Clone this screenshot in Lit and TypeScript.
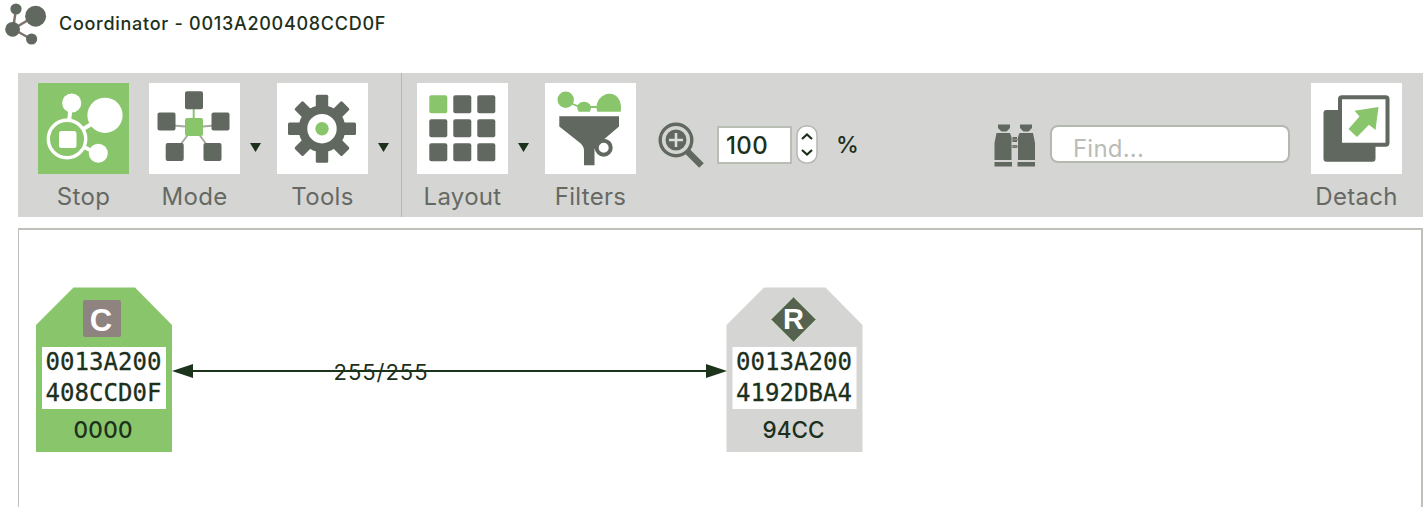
import { LitElement, html, svg, css } from "lit";
import { customElement, property } from "lit/decorators.js";

const DARK = "#60685f";
const GREEN = "#89c56b";

const sq = (x: number, y: number, fill = DARK) =>
  svg`<rect x=${x} y=${y} width="18" height="18" rx="2" fill=${fill} />`;

const icons: Record<string, unknown> = {
  stop: svg`
    <g stroke="#fff" stroke-width="4" fill="none">
      <path d="M32.500 26 31 38M45 46 57 39M46 64 56 69" />
      <circle cx="29" cy="56" r="18.7" stroke-width="3.4" />
    </g>
    <g fill="#fff">
      <circle cx="33.7" cy="20" r="9.6" /><circle cx="67" cy="32.3" r="17.6" />
      <circle cx="60.3" cy="70.3" r="9.5" /><rect x="21" y="48" width="17.5" height="17" rx="2.5" />
    </g>`,
  mode: svg`
    <path d="M18 42 36 43.500M72 42 54 43.500M44.700 44 26 69M44.700 44 63 69" stroke="#a3ab9e" stroke-width="2" fill="none" />
    <path d="M44.700 24V40" stroke=${GREEN} stroke-width="2" />
    <circle cx="44.7" cy="59.5" r="6.5" fill="#fff" />
    ${sq(36, 8.3)}${sq(8.5, 29.5)}${sq(62.5, 29.5)}${sq(36, 35, GREEN)}${sq(16.7, 60)}${sq(54.5, 60)}`,
  tools: svg`
    <g transform="translate(45 45.7)" fill=${DARK}>
      ${[0, 90].map((a) => svg`<rect x="-6.2" y="-34" width="12.4" height="68" rx="1.5" transform="rotate(${a})" />`)}
      ${[45, 135].map((a) => svg`<rect x="-6" y="-33.5" width="12" height="67" rx="1.5" transform="rotate(${a})" />`)}
      <circle r="23.5" /><circle r="14.7" fill="#fff" /><circle r="6.7" fill=${GREEN} />
    </g>`,
  layout: svg`${[12.3, 36.3, 60.2].map((y, r) =>
    [12.3, 36.3, 60.3].map((x, c) => sq(x, y, r + c === 0 ? GREEN : DARK)))}`,
  filters: svg`
    <g fill=${GREEN}>
      <path d="M24 19.5 35 24H55" fill="none" stroke=${GREEN} stroke-width="1.8" />
      <circle cx="20.7" cy="16.7" r="8.2" />
      <path d="M33.7 28.8C30 23 34 18.800 39 18.800c5 0 9 4.200 5.800 10z" />
      <path d="M52.300 28.800C49 19 57 10.800 64.500 10.800S77.500 18 75.700 28.800z" />
    </g>
    <path d="M14.300 33.300H74V43.500L60 55.500 49.500 66V82.300H39V67.500C39 64 37 61.500 34.500 59.500L14.300 43.500z" fill=${DARK} />
    <circle cx="58.700" cy="64.700" r="7" fill="#fff" stroke=${DARK} stroke-width="4" />`,
  detach: svg`
    <rect x="12.500" y="27" width="52" height="51.700" rx="3" fill=${DARK} />
    <rect x="29" y="14.300" width="47.500" height="47.500" rx="2" fill="#fff" stroke=${DARK} stroke-width="4" />
    <path d="M67.500 24 64.500 47 58 41.700 46 54 37.500 46 48.500 33.500 43.500 27.800z" fill=${GREEN} />`,
};

@customElement("tool-button")
class ToolButton extends LitElement {
  @property() icon = "";
  @property() label = "";
  @property({ type: Boolean }) active = false;
  @property({ type: Boolean }) menu = false;

  static styles = css`
    :host { display: flex; align-items: flex-start; }
    .body { display: flex; flex-direction: column; align-items: center; width: 91px; }
    .tile { display: block; width: 91px; height: 91px; background: #fff; }
    .tile.active { background: #89c56b; }
    .label { margin-top: 7px; font-size: 24px; line-height: 32px; letter-spacing: 0.3px; color: #666963; white-space: nowrap; }
    .caret { width: 11px; height: 9px; margin: 60px 0 0 10px; }
  `;

  render() {
    return html`
      <div class="body">
        <svg class="tile ${this.active ? "active" : ""}" viewBox="0 0 91 91">${icons[this.icon]}</svg>
        <span class="label">${this.label}</span>
      </div>
      ${this.menu ? html`<svg class="caret" viewBox="0 0 11 9"><path d="M0 0H11L5.500 9z" fill="#1b301a" /></svg>` : ""}
    `;
  }
}

@customElement("network-map")
class NetworkMap extends LitElement {
  static styles = css`
    :host { display: block; }
    svg { display: block; }
    text { font-family: Inter, sans-serif; fill: #1c301c; }
    .mono { font-family: "DejaVu Sans Mono", monospace; font-size: 24px; stroke: #1c301c; stroke-width: 0.3px; }
    .short { font-size: 22.5px; font-weight: 500; }
    .badge { font-family: "Liberation Sans", sans-serif; font-weight: 700; fill: #fff; }
    .quality { font-size: 22px; }
  `;

  node(x: number, fill: string, badge: unknown, high: string, low: string, short: string, width: number) {
    return svg`<g transform="translate(${x} 57.5)">
      <path d="M0 37.500 37.500 0H99L136 37.500V164.500H0z" fill=${fill} />
      ${badge}
      <rect x="6" y="59.500" width="124" height="62" fill="#fff" />
      <text class="mono" x="9.500" y="82.500" textLength="116">${high}</text>
      <text class="mono" x="9.500" y="113.500" textLength="116">${low}</text>
      <text class="short" x="67" y="150.500" text-anchor="middle" textLength=${width}>${short}</text>
    </g>`;
  }

  render() {
    return html`<svg width="1401" height="277" viewBox="0 0 1401 277">
      ${this.node(17, GREEN, svg`<rect x="47" y="12.500" width="38" height="37" rx="2" fill="#8f8380" />
        <text class="badge" x="65" y="43" font-size="31" text-anchor="middle">C</text>`,
        "0013A200", "408CCD0F", "0000", 59)}
      ${this.node(707.5, "#d5d6d4", svg`<path d="M67 10 89 32 67 54 45 32z" fill="#56614f" stroke="#719361" />
        <text class="badge" x="67" y="41.500" font-size="29" text-anchor="middle">R</text>`,
        "0013A200", "4192DBA4", "94CC", 62)}
      <text class="quality" x="314.500" y="150" textLength="94">255/255</text>
      <path d="M170 141H690" stroke="#1c341c" stroke-width="2" />
      <path d="M153 141 174 134V148zM708 141 687 134V148z" fill="#1c341c" />
    </svg>`;
  }
}

@customElement("app-root")
class AppRoot extends LitElement {
  static styles = css`
    :host { display: block; height: 510px; overflow: hidden; background: #fff; font-family: Inter, sans-serif; color: #1c301c; }
    .title { display: flex; height: 73px; padding-left: 4px; box-sizing: border-box; }
    .logo { width: 46px; height: 46px; }
    .name { margin-left: 9px; padding-top: 12px; font-size: 18px; font-weight: 500; line-height: 24px; letter-spacing: 0.72px; white-space: nowrap; }
    .toolbar { display: flex; align-items: flex-start; box-sizing: border-box; height: 144px; margin: 0 2px 0 18px; padding: 10px 21px 0 20px; background: #d5d6d4; }
    .mode { margin-left: 20px; }
    .tools { margin-left: 16px; }
    .rule { width: 1px; height: 144px; margin: -10px 15px 0 12px; background: #b4b9b0; }
    .filters { margin-left: 16px; }
    .glass { width: 48px; height: 48px; margin: 38px 0 0 22px; }
    .zoom { box-sizing: border-box; width: 75px; height: 38px; margin: 43px 0 0 11px; padding-left: 7px; border: 2px solid #b9beb5; background: #fff; font-size: 24px; font-weight: 500; letter-spacing: 0.4px; line-height: 36px; }
    .stepper { width: 22px; height: 39px; margin: 42px 0 0 4px; }
    .percent { margin: 46px 0 0 18px; font-size: 23px; font-weight: 500; line-height: 32px; }
    .binoculars { width: 44px; height: 44px; margin: 41px 0 0 auto; }
    .find { box-sizing: border-box; width: 240px; height: 38px; margin: 42px 21px 0 13px; padding: 6px 0 0 21px; border: 2px solid #b4b9b0; border-radius: 8px; background: #fff; color: #babdb6; font-size: 24px; line-height: 32px; letter-spacing: 0.2px; }
    .canvas { box-sizing: border-box; height: 279px; margin: 11px 2px 0 18px; border: 2px solid #bdc1b9; border-width: 2px 2px 0 1px; }
  `;

  render() {
    return html`
      <header class="title">
        <svg class="logo" viewBox="4 0 46 46">
          <path d="M16 9 13 29 35 16M13 29 31 39" stroke="#80736d" stroke-width="2.500" fill="none" />
          <g fill=${DARK}>
            <circle cx="16" cy="9" r="5.600" /><circle cx="35.600" cy="16.200" r="10.500" />
            <circle cx="12.600" cy="29.300" r="7.400" /><circle cx="31.600" cy="39" r="5.600" />
          </g>
        </svg>
        <span class="name">Coordinator - 0013A200408CCD0F</span>
      </header>
      <nav class="toolbar">
        <tool-button icon="stop" label="Stop" active></tool-button>
        <tool-button class="mode" icon="mode" label="Mode" menu></tool-button>
        <tool-button class="tools" icon="tools" label="Tools" menu></tool-button>
        <div class="rule"></div>
        <tool-button icon="layout" label="Layout" menu></tool-button>
        <tool-button class="filters" icon="filters" label="Filters"></tool-button>
        <svg class="glass" viewBox="658 121 48 48">
          <path d="M687 151 701.500 165.500" stroke=${DARK} stroke-width="6.500" />
          <circle cx="676" cy="140" r="15.800" fill="#d5d6d4" stroke=${DARK} stroke-width="3.400" />
          <circle cx="676" cy="140" r="10.500" fill=${DARK} />
          <path d="M676 133V147M669 140H683" stroke="#dddedb" stroke-width="2.600" />
        </svg>
        <div class="zoom">100</div>
        <svg class="stepper" viewBox="0 0 22 39">
          <rect x="1" y="1" width="20" height="37" rx="9" fill="#fff" stroke="#b4b9b0" stroke-width="1.500" />
          <path d="M6 14 11 9.500 16 14M6 25 11 29.500 16 25" fill="none" stroke="#1c301c" stroke-width="2.200" />
        </svg>
        <span class="percent">%</span>
        <svg class="binoculars" viewBox="993 124 44 44">
          <g fill=${DARK}>
            <path d="M998 124.500h12v3.500l-3.500 3.500h-5l-3.500-3.500zM1020 124.500h12v3.500l-3.500 3.500h-5l-3.500-3.500z" />
            <path d="M996.500 133h13.500l1.500 4v23h-17v-17zM1019.500 133h13.500l2 10v17h-17v-23z" />
            <path d="M994.500 162h17.500v4.500h-17.500zM1017.500 162h17.500v4.500h-17.500zM1012.500 137h4.500v5h-4.500zM1012.500 145h4.500v3h-4.500z" />
          </g>
          <path d="M1011 139.500h7M1011 146.500h7" stroke="#908986" stroke-width="1.500" />
        </svg>
        <div class="find">Find...</div>
        <tool-button icon="detach" label="Detach"></tool-button>
      </nav>
      <main class="canvas"><network-map></network-map></main>
    `;
  }
}
